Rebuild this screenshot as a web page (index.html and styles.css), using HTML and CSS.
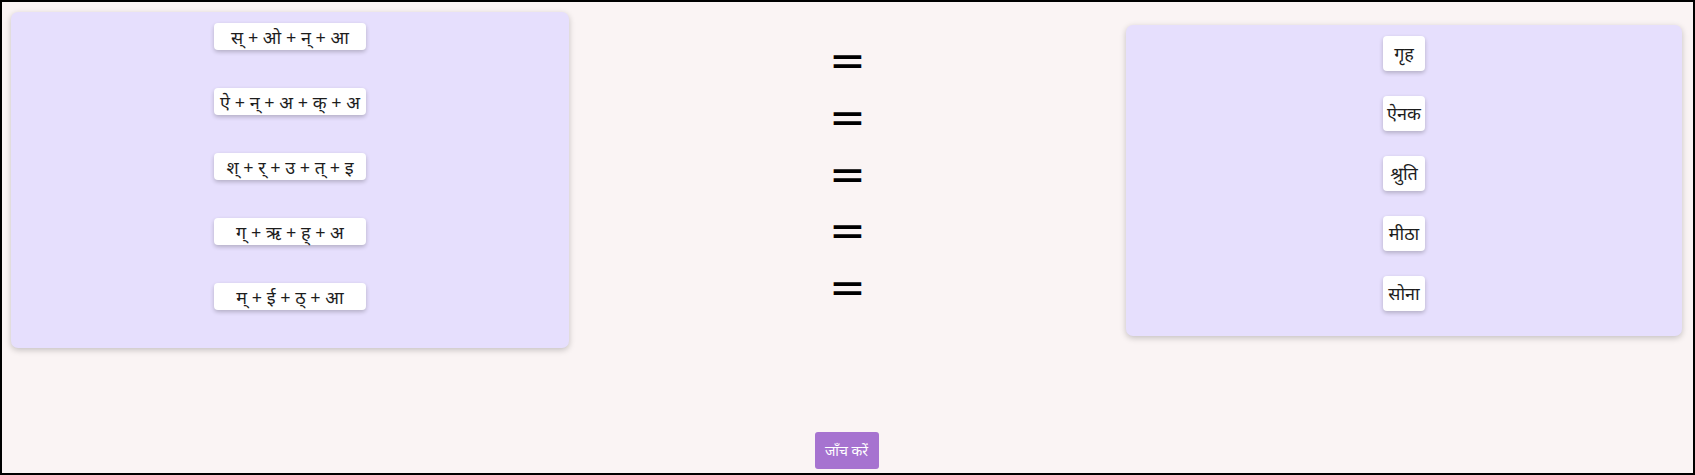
FILE: index.html
```html
<!DOCTYPE html>
<html lang="hi">
<head>
<meta charset="utf-8">
<title>वर्ण मिलान</title>
<link rel="stylesheet" href="styles.css">
</head>
<body>
<div class="page">
  <div class="board">
    <div class="panel panel-left">
      <div class="tile tile-wide">स् + ओ + न् + आ</div>
      <div class="tile tile-wide">ऐ + न् + अ + क् + अ</div>
      <div class="tile tile-wide">श् + र् + उ + त् + इ</div>
      <div class="tile tile-wide">ग् + ऋ + ह् + अ</div>
      <div class="tile tile-wide">म् + ई + ठ् + आ</div>
    </div>
    <div class="equals">
      <div class="eq">=</div>
      <div class="eq">=</div>
      <div class="eq">=</div>
      <div class="eq">=</div>
      <div class="eq">=</div>
    </div>
    <div class="panel panel-right">
      <div class="tile tile-word">गृह</div>
      <div class="tile tile-word">ऐनक</div>
      <div class="tile tile-word">श्रुति</div>
      <div class="tile tile-word">मीठा</div>
      <div class="tile tile-word">सोना</div>
    </div>
  </div>
  <div class="actions">
    <button class="check">जाँच करें</button>
  </div>
</div>
</body>
</html>
```
FILE: styles.css
```css
html, body {
  margin: 0;
  padding: 0;
}
body {
  font-family: "Noto Sans", "Liberation Sans", sans-serif;
  color: #1d1d1d;
  background: #faf4f4;
}
.page {
  box-sizing: border-box;
  height: 475px;
  border: 2px solid #000;
  background: #faf4f4;
  padding: 10px 11px 0 9px;
  display: flex;
  flex-direction: column;
}
.board {
  display: flex;
  justify-content: space-between;
  align-items: center;
}
.panel {
  background: #e6dffd;
  border-radius: 7px;
  box-shadow: 0 2px 6px rgba(0, 0, 0, 0.22);
  display: flex;
  flex-direction: column;
  align-items: center;
}
.panel-left {
  width: 558px;
  padding: 11px 0 0;
}
.panel-left .tile {
  margin-bottom: 38px;
}
.panel-right {
  width: 556px;
  padding: 11px 0 25px;
  gap: 25px;
}
.tile {
  background: #fff;
  border-radius: 4px;
  box-shadow: 0 2px 4px rgba(0, 0, 0, 0.22);
  font-size: 18px;
  display: flex;
  align-items: center;
  justify-content: center;
}
.tile-wide {
  width: 152px;
  height: 27px;
}
.tile-word {
  width: 42px;
  height: 35px;
}
.equals {
  display: flex;
  flex-direction: column;
  align-items: center;
  padding-bottom: 10px;
}
.eq {
  font-family: "DejaVu Sans", sans-serif;
  font-size: 44px;
  line-height: 56.7px;
  height: 56.7px;
  color: #000;
}
.actions {
  margin-top: auto;
  display: flex;
  justify-content: center;
  padding-bottom: 4px;
}
.check {
  background: #a673d0;
  color: #fff;
  border: none;
  border-radius: 3px;
  font-family: "Noto Sans", "Liberation Sans", sans-serif;
  font-size: 14px;
  width: 64px;
  height: 37px;
  padding: 0;
}
```
